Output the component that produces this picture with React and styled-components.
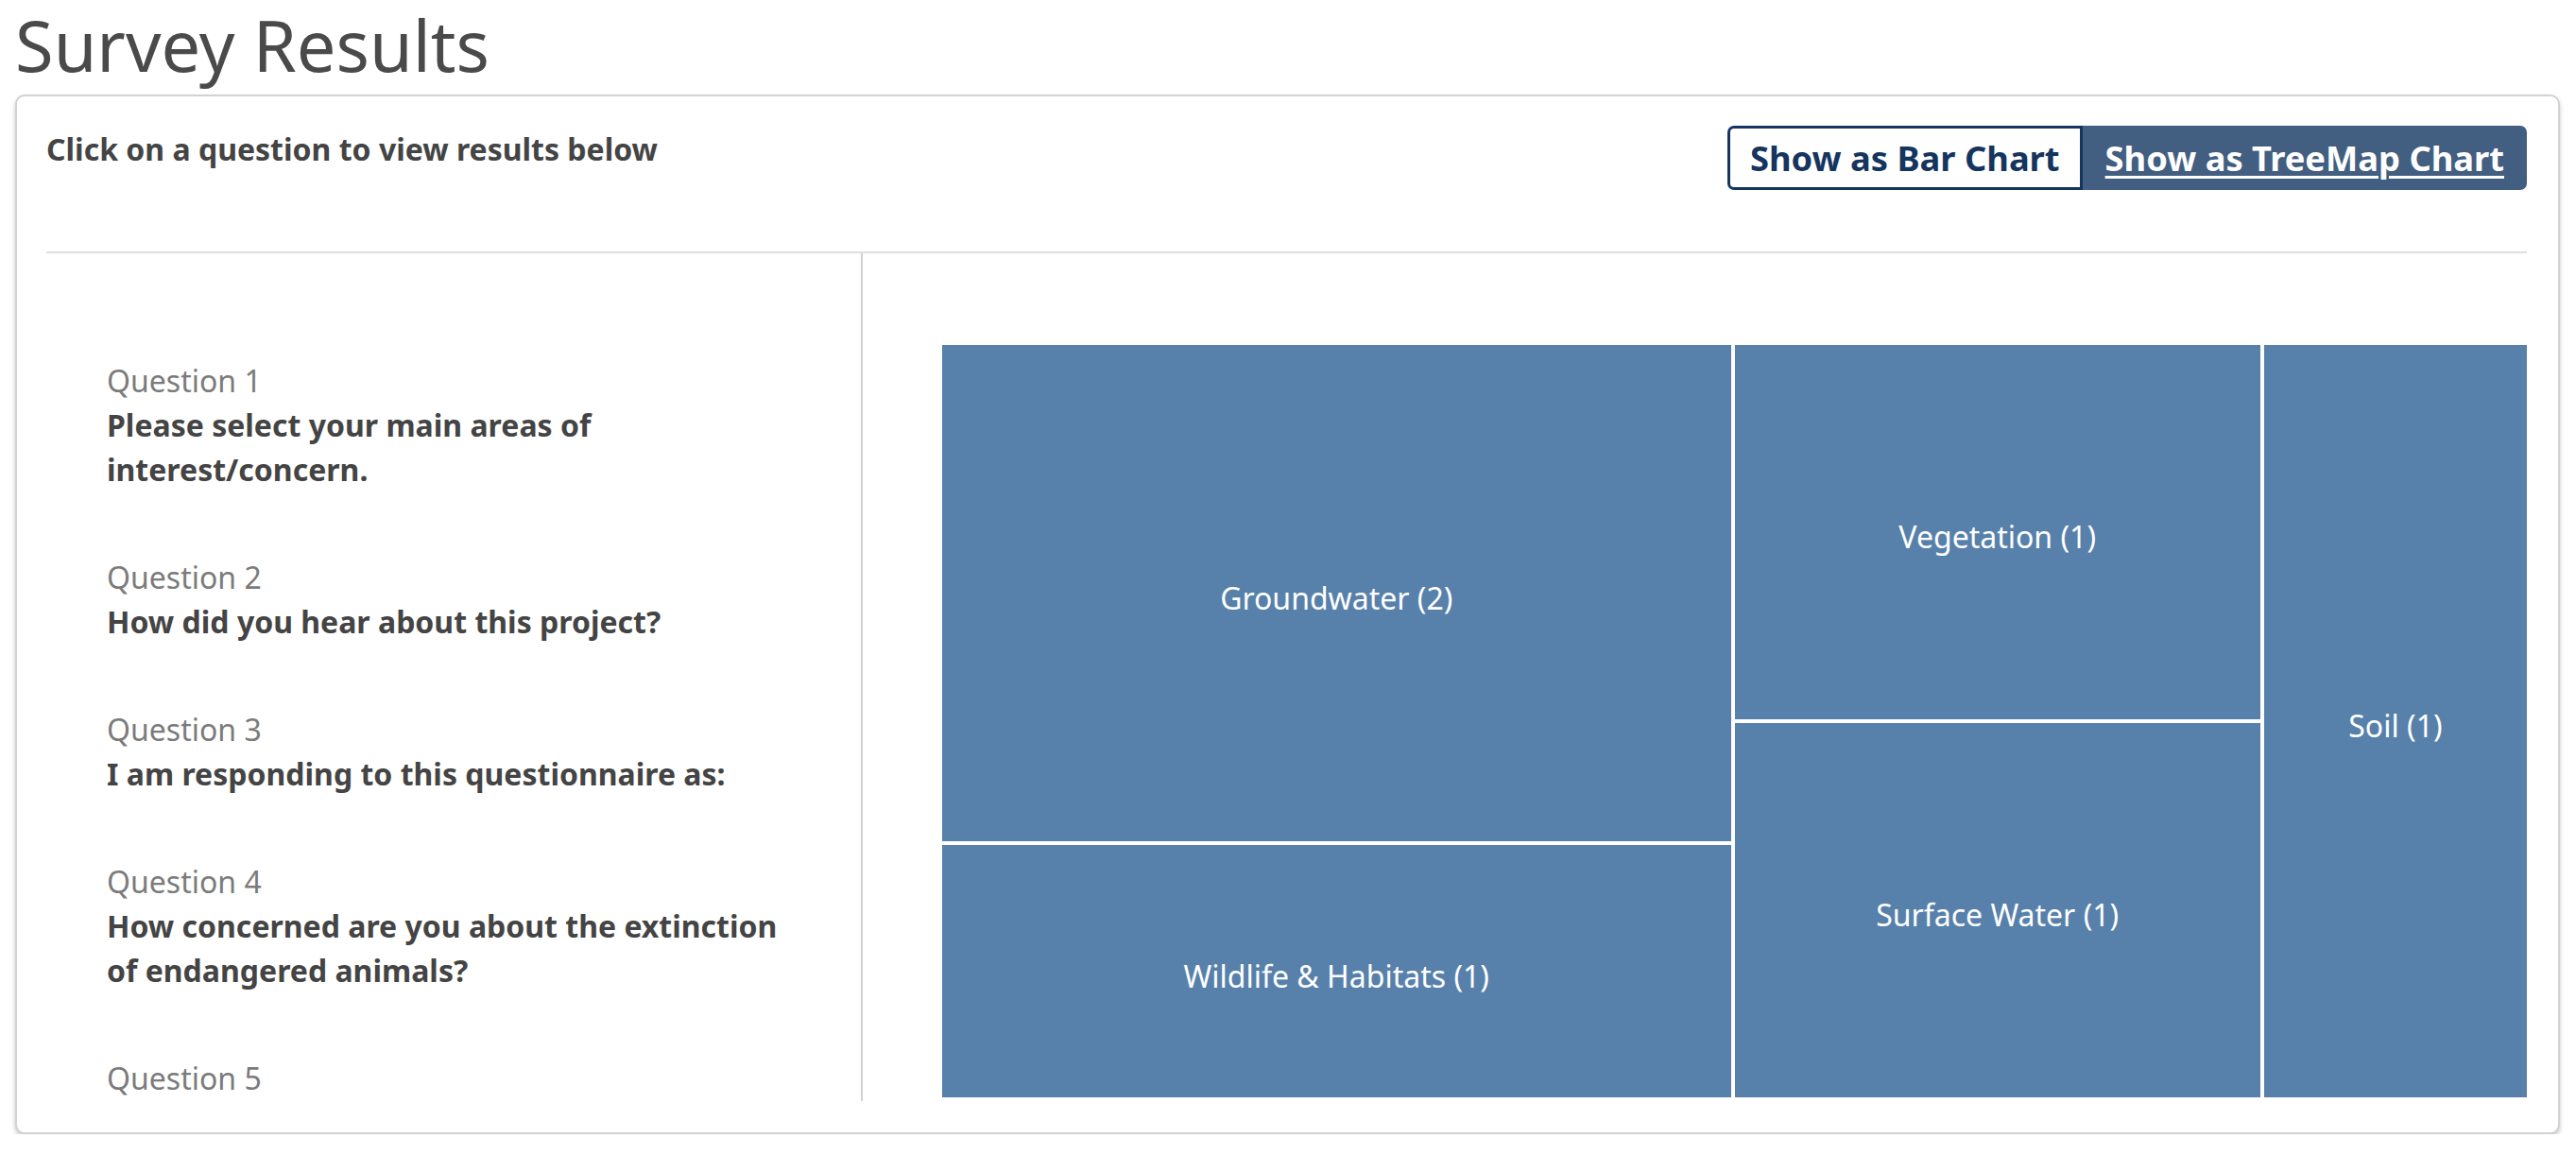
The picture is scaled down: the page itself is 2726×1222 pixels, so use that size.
import React from 'react';
import styled, { createGlobalStyle } from 'styled-components';

const GlobalStyle = createGlobalStyle`
  body {
    margin: 0;
    background: #ffffff;
    font-family: "Noto Sans", "Open Sans", sans-serif;
    color: #444444;
  }
`;

const Page = styled.div`
  padding: 0 17px 0 16px;
`;

const Title = styled.h1`
  margin: 3px 0 7px;
  font-size: 74px;
  line-height: 90px;
  font-weight: 400;
  color: #4a4a4a;
`;

const Card = styled.section`
  border: 2px solid #d2d2d2;
  border-radius: 10px;
  box-shadow: 0 3px 5px rgba(0, 0, 0, 0.22);
  padding: 31px 33px 33px 31px;
  background: #fff;
`;

const Header = styled.div`
  display: flex;
  justify-content: space-between;
  align-items: flex-start;
  margin-bottom: 65px;
`;

const Hint = styled.p`
  margin: 1px 0 0;
  font-size: 32px;
  line-height: 47px;
  font-weight: 700;
  color: #444;
`;

const Toggle = styled.div`
  display: flex;
`;

const ToggleButton = styled.button`
  height: 68px;
  padding: 0 21px;
  font-family: inherit;
  font-size: 36.3px;
  font-weight: 700;
  border: 3px solid ${(p) => (p.active ? '#15355f' : '#425e81')};
  background: ${(p) => (p.active ? '#ffffff' : '#425e81')};
  color: ${(p) => (p.active ? '#15355f' : '#ffffff')};
  text-decoration: ${(p) => (p.active ? 'none' : 'underline')};
  text-underline-offset: 5px;
  text-decoration-thickness: 3px;
  border-radius: ${(p) => (p.first ? '7px 0 0 7px' : '0 7px 7px 0')};
  cursor: pointer;
`;

const Body = styled.div`
  display: grid;
  grid-template-columns: 864px 1fr;
  border-top: 2px solid #dedede;
`;

const QuestionList = styled.ul`
  list-style: none;
  margin: 0;
  padding: 111px 64px 0;
  height: 897px;
  box-sizing: border-box;
  overflow: hidden;
  border-right: 2px solid #d0d0d0;
`;

const QuestionItem = styled.li`
  margin-bottom: 67px;
  cursor: pointer;
`;

const QuestionLabel = styled.div`
  font-size: 32px;
  line-height: 47px;
  color: #7b7b7b;
`;

const QuestionText = styled.div`
  font-size: 32px;
  line-height: 47px;
  font-weight: 700;
  color: #444;
`;

const ChartArea = styled.div`
  padding: 97px 0 0 84px;
`;

const TreeMap = styled.div`
  display: flex;
  gap: 4px;
  height: 796px;
`;

const TreeColumn = styled.div`
  flex: ${(p) => p.weight} 1 0;
  display: flex;
  flex-direction: column;
  gap: 4px;
`;

const Tile = styled.div`
  flex: ${(p) => p.weight} 1 0;
  background: #5781ab;
  color: #ffffff;
  font-size: 32px;
  padding-top: 9px;
  display: flex;
  align-items: center;
  justify-content: center;
  text-align: center;
`;

const questions = [
  'Please select your main areas of interest/concern.',
  'How did you hear about this project?',
  'I am responding to this questionnaire as:',
  'How concerned are you about the extinction of endangered animals?',
  'Do you have any other comments?',
];

const columns = [
  { weight: 3, tiles: [{ label: 'Groundwater', count: 2 }, { label: 'Wildlife & Habitats', count: 1 }] },
  { weight: 2, tiles: [{ label: 'Vegetation', count: 1 }, { label: 'Surface Water', count: 1 }] },
  { weight: 1, tiles: [{ label: 'Soil', count: 1 }] },
];

export default function App() {
  return (
    <Page>
      <GlobalStyle />
      <Title>Survey Results</Title>
      <Card>
        <Header>
          <Hint>Click on a question to view results below</Hint>
          <Toggle>
            <ToggleButton active first>Show as Bar Chart</ToggleButton>
            <ToggleButton>Show as TreeMap Chart</ToggleButton>
          </Toggle>
        </Header>
        <Body>
          <QuestionList>
            {questions.map((q, i) => (
              <QuestionItem key={q}>
                <QuestionLabel>Question {i + 1}</QuestionLabel>
                <QuestionText>{q}</QuestionText>
              </QuestionItem>
            ))}
          </QuestionList>
          <ChartArea>
            <TreeMap>
              {columns.map((col) => (
                <TreeColumn key={col.weight} weight={col.weight}>
                  {col.tiles.map((t) => (
                    <Tile key={t.label} weight={t.count}>
                      {t.label} ({t.count})
                    </Tile>
                  ))}
                </TreeColumn>
              ))}
            </TreeMap>
          </ChartArea>
        </Body>
      </Card>
    </Page>
  );
}
